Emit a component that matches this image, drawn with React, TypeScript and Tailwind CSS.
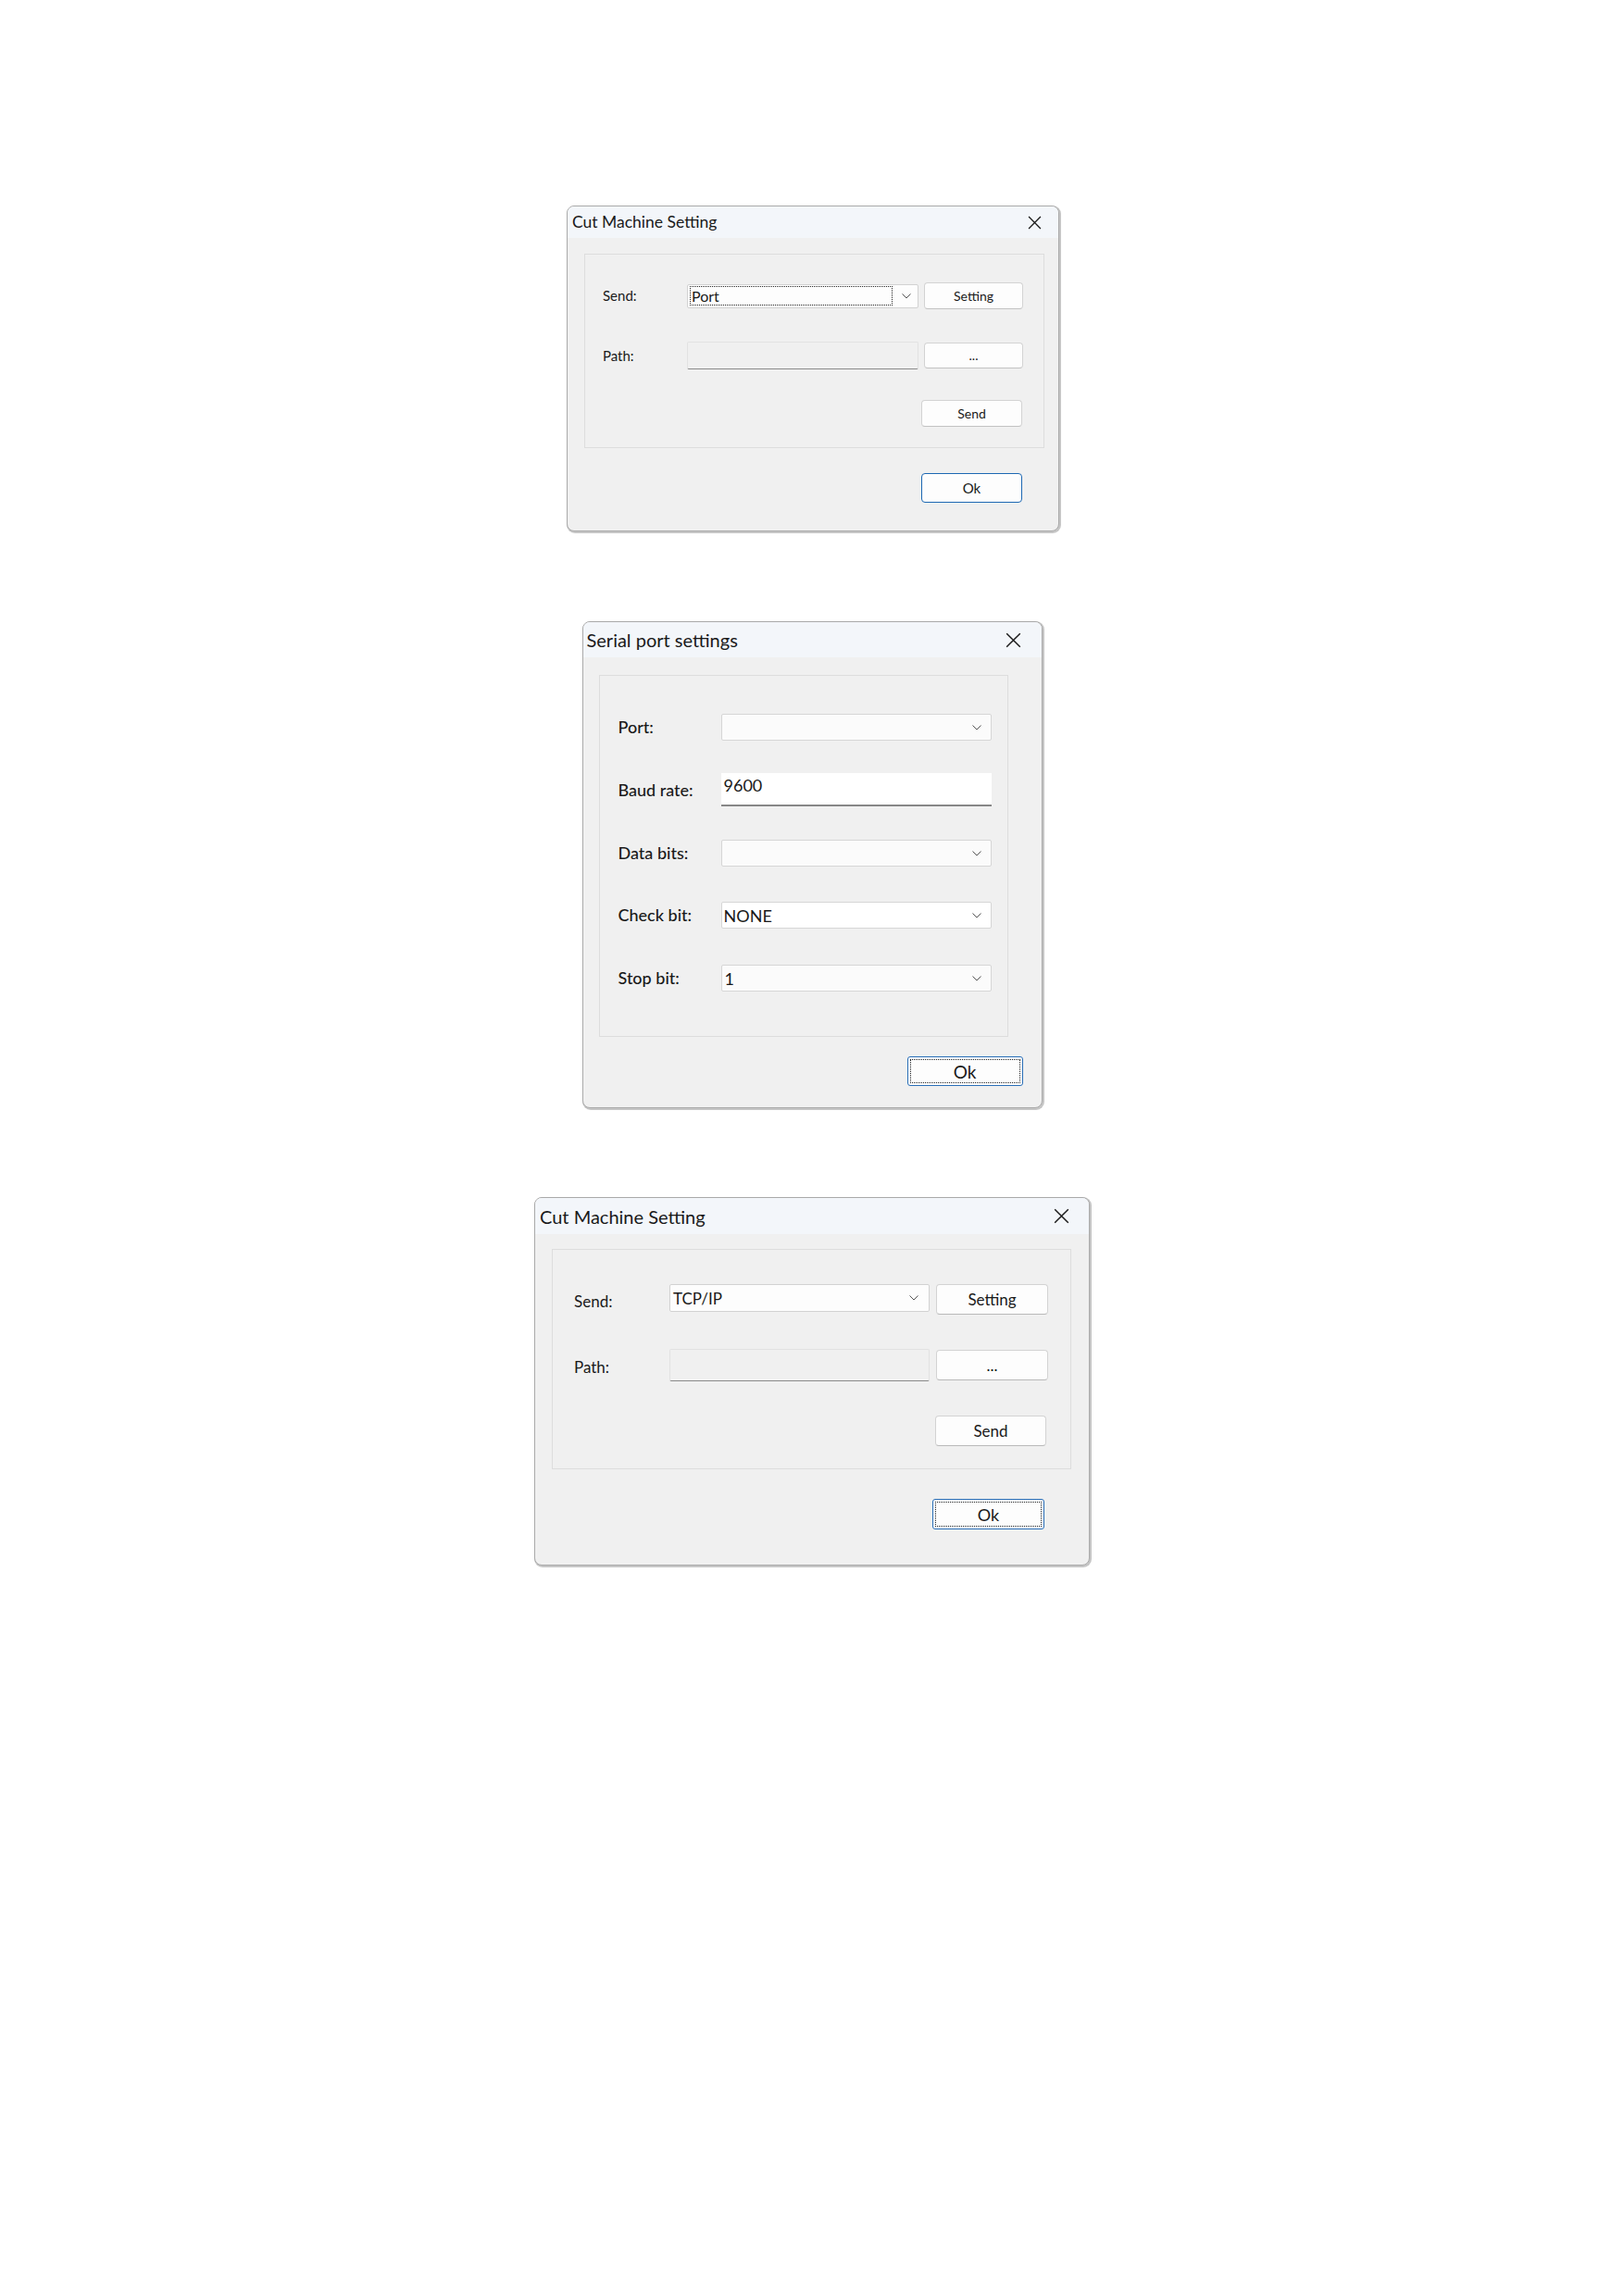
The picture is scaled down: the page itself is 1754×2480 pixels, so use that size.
import React from "react";

// Win11-style dialogs, three screenshots stacked down the page
function CloseX({ size }: { size: number }) {
  return (
    <svg width={size} height={size} viewBox="0 0 14 14" className="shrink-0">
      <path d="M1 1 L13 13 M13 1 L1 13" stroke="#1a1a1a" strokeWidth="1.2" fill="none" />
    </svg>
  );
}

function Chevron() {
  return (
    <svg width="10" height="6" viewBox="0 0 10 6" className="shrink-0">
      <path d="M0.5 0.5 L5 5 L9.5 0.5" stroke="#555555" strokeWidth="1" fill="none" />
    </svg>
  );
}

export default function App() {
  return (
    <div className="min-h-[2480px] w-full bg-white flex flex-col items-center pt-[222px] font-['Lato',sans-serif] text-[#1a1a1a]">
      {/* Cut Machine Setting (small, Port) */}
      <div className="w-[532px] h-[352px] ml-[2px] flex flex-col rounded-[8px] border border-[#a9a9a9] bg-[#f0f0f0] shadow-[1px_1px_0_1px_#c6c6c6] overflow-hidden">
        <div className="h-[34px] shrink-0 flex items-center justify-between bg-[#f3f6fa] pl-[5px] pr-[18px]">
          <span className="text-[17.5px] leading-none">Cut Machine Setting</span>
          <CloseX size={15} />
        </div>
        <div className="flex flex-col pt-[17px] pl-[18px] pr-[15px]">
          <div className="h-[210px] border border-[#dddddd] flex flex-col pt-[30px] pl-[19px] pr-[22px]">
            <div className="flex items-center h-[29px]">
              <span className="w-[91px] text-[15px]">Send:</span>
              <div className="w-[250px] h-[26px] flex items-center bg-[#fdfdfd] border border-[#d2d2d2] rounded-[2px] pl-[2px] pr-[7px]">
                <div className="flex-1 h-[21px] flex items-center border border-dotted border-[#222] pl-[1px] text-[16px] leading-none">Port</div>
                <div className="ml-[10px]"><Chevron /></div>
              </div>
              <button className="ml-[6px] w-[107px] h-[29px] bg-[#fdfdfd] border border-[#d3d3d3] border-b-[#c2c2c2] rounded-[4px] text-[14px]">Setting</button>
            </div>
            <div className="flex items-center h-[30px] mt-[35px]">
              <span className="w-[91px] text-[15px]">Path:</span>
              <div className="w-[250px] h-[30px] bg-[#f0f0f0] border border-[#e2e2e2] border-b-[#8a8a8a] rounded-[2px]" />
              <button className="ml-[6px] w-[107px] h-[28px] bg-[#fdfdfd] border border-[#d3d3d3] border-b-[#c2c2c2] rounded-[4px] text-[14px] leading-none">...</button>
            </div>
            <div className="flex justify-end mt-[33px]">
              <button className="w-[109px] h-[29px] mr-[1px] bg-[#fdfdfd] border border-[#d3d3d3] border-b-[#c2c2c2] rounded-[4px] text-[14px]">Send</button>
            </div>
          </div>
          <div className="flex justify-end mt-[27px] pr-[24px]">
            <button className="w-[109px] h-[32px] bg-[#fdfdfd] border border-[#1d68b3] rounded-[4px] text-[15px]">Ok</button>
          </div>
        </div>
      </div>

      {/* Serial port settings */}
      <div className="w-[497px] h-[526px] mt-[97px] flex flex-col rounded-[8px] border border-[#a9a9a9] bg-[#f0f0f0] shadow-[1px_1px_0_1px_#c6c6c6] overflow-hidden">
        <div className="h-[38px] shrink-0 flex items-center justify-between bg-[#f3f6fa] pl-[4px] pr-[22px]">
          <span className="text-[20px] leading-none">Serial port settings</span>
          <CloseX size={17} />
        </div>
        <div className="flex flex-col pt-[19px] pl-[17px]">
          <div className="w-[442px] h-[391px] border border-[#dddddd] flex flex-col pt-[41px] pl-[20px] text-[18px]">
            <div className="flex items-center h-[29px]">
              <span className="w-[111px] font-medium">Port:</span>
              <div className="w-[292px] h-[29px] flex items-center justify-end bg-[#fbfbfb] border border-[#d6d6d6] rounded-[2px] pr-[10px]"><Chevron /></div>
            </div>
            <div className="flex items-center h-[36px] mt-[35px]">
              <span className="w-[111px] font-medium">Baud rate:</span>
              <div className="w-[292px] h-[36px] flex items-start bg-white border-b-2 border-[#878787] pl-[3px] pt-[4px] leading-none">9600</div>
            </div>
            <div className="flex items-center h-[29px] mt-[36px]">
              <span className="w-[111px] font-medium">Data bits:</span>
              <div className="w-[292px] h-[29px] flex items-center justify-end bg-[#fbfbfb] border border-[#d6d6d6] rounded-[2px] pr-[10px]"><Chevron /></div>
            </div>
            <div className="flex items-center h-[29px] mt-[38px]">
              <span className="w-[111px] font-medium">Check bit:</span>
              <div className="w-[292px] h-[29px] flex items-center bg-white border border-[#d6d6d6] rounded-[2px] pl-[2px] pr-[10px]">
                <span className="flex-1 leading-none">NONE</span>
                <Chevron />
              </div>
            </div>
            <div className="flex items-center h-[29px] mt-[39px]">
              <span className="w-[111px] font-medium">Stop bit:</span>
              <div className="w-[292px] h-[29px] flex items-center bg-[#fbfbfb] border border-[#d6d6d6] rounded-[2px] pl-[3px] pr-[10px]">
                <span className="flex-1 leading-none">1</span>
                <Chevron />
              </div>
            </div>
          </div>
          <div className="flex justify-end mt-[21px] pr-[20px]">
            <button className="w-[125px] h-[32px] p-[2px] bg-[#fdfdfd] border border-[#2a6fb8] rounded-[3px]">
              <div className="w-full h-full flex items-center justify-center border border-dotted border-[#222] text-[19px] leading-none">Ok</div>
            </button>
          </div>
        </div>
      </div>

      {/* Cut Machine Setting (large, TCP/IP) */}
      <div className="w-[600px] h-[398px] mt-[96px] flex flex-col rounded-[8px] border border-[#a9a9a9] bg-[#f0f0f0] shadow-[1px_1px_0_1px_#c6c6c6] overflow-hidden">
        <div className="h-[39px] shrink-0 flex items-center justify-between bg-[#f3f6fa] pl-[5px] pr-[21px]">
          <span className="text-[20px] leading-none">Cut Machine Setting</span>
          <CloseX size={17} />
        </div>
        <div className="flex flex-col pt-[16px] pl-[18px]">
          <div className="w-[561px] h-[238px] border border-[#dddddd] flex flex-col pt-[37px] pl-[23px] text-[17px]">
            <div className="flex items-start h-[33px]">
              <span className="w-[103px] mt-[6px]">Send:</span>
              <div className="w-[281px] h-[30px] flex items-center bg-[#fdfdfd] border border-[#d2d2d2] rounded-[2px] pl-[3px] pr-[11px]">
                <span className="flex-1 leading-none">TCP/IP</span>
                <Chevron />
              </div>
              <button className="ml-[7px] w-[121px] h-[33px] bg-[#fdfdfd] border border-[#d3d3d3] border-b-[#b9b9b9] rounded-[4px]">Setting</button>
            </div>
            <div className="flex items-start h-[35px] mt-[37px]">
              <span className="w-[103px] mt-[7px]">Path:</span>
              <div className="w-[281px] h-[35px] bg-[#f0f0f0] border border-[#e2e2e2] border-b-[#8a8a8a] rounded-[2px]" />
              <button className="ml-[7px] mt-[1px] w-[121px] h-[33px] bg-[#fdfdfd] border border-[#d3d3d3] border-b-[#b9b9b9] rounded-[4px] leading-none">...</button>
            </div>
            <div className="flex justify-end mt-[37px] pr-[26px]">
              <button className="w-[120px] h-[33px] bg-[#fdfdfd] border border-[#d3d3d3] border-b-[#b9b9b9] rounded-[4px]">Send</button>
            </div>
          </div>
          <div className="flex justify-end mt-[32px] pr-[48px]">
            <button className="w-[121px] h-[33px] p-[2px] bg-[#fdfdfd] border border-[#2a6fb8] rounded-[3px]">
              <div className="w-full h-full flex items-center justify-center border border-dotted border-[#222] text-[18px] leading-none">Ok</div>
            </button>
          </div>
        </div>
      </div>
    </div>
  );
}
